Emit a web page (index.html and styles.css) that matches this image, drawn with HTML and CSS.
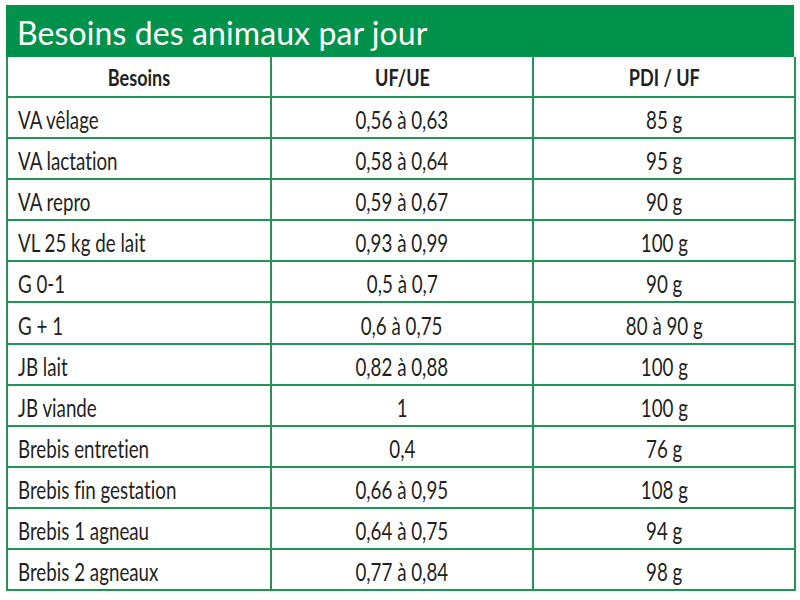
FILE: index.html
```html
<!DOCTYPE html>
<html lang="fr">
<head>
<meta charset="utf-8">
<title>Besoins des animaux par jour</title>
<link rel="stylesheet" href="styles.css">
</head>
<body>
<div class="card">
  <h1 class="title">Besoins des animaux par jour</h1>
  <table class="grid">
    <colgroup><col class="c1"><col class="c2"><col class="c3"></colgroup>
    <thead>
      <tr><th><span class="t">Besoins</span></th><th><span class="t">UF/UE</span></th><th><span class="t">PDI / UF</span></th></tr>
    </thead>
    <tbody>
      <tr><td><span class="t">VA vêlage</span></td><td><span class="t">0,56 à 0,63</span></td><td><span class="t">85 g</span></td></tr>
      <tr><td><span class="t">VA lactation</span></td><td><span class="t">0,58 à 0,64</span></td><td><span class="t">95 g</span></td></tr>
      <tr><td><span class="t">VA repro</span></td><td><span class="t">0,59 à 0,67</span></td><td><span class="t">90 g</span></td></tr>
      <tr><td><span class="t">VL 25 kg de lait</span></td><td><span class="t">0,93 à 0,99</span></td><td><span class="t">100 g</span></td></tr>
      <tr><td><span class="t">G 0-1</span></td><td><span class="t">0,5 à 0,7</span></td><td><span class="t">90 g</span></td></tr>
      <tr><td><span class="t">G + 1</span></td><td><span class="t">0,6 à 0,75</span></td><td><span class="t">80 à 90 g</span></td></tr>
      <tr><td><span class="t">JB lait</span></td><td><span class="t">0,82 à 0,88</span></td><td><span class="t">100 g</span></td></tr>
      <tr><td><span class="t">JB viande</span></td><td><span class="t">1</span></td><td><span class="t">100 g</span></td></tr>
      <tr><td><span class="t">Brebis entretien</span></td><td><span class="t">0,4</span></td><td><span class="t">76 g</span></td></tr>
      <tr><td><span class="t">Brebis fin gestation</span></td><td><span class="t">0,66 à 0,95</span></td><td><span class="t">108 g</span></td></tr>
      <tr><td><span class="t">Brebis 1 agneau</span></td><td><span class="t">0,64 à 0,75</span></td><td><span class="t">94 g</span></td></tr>
      <tr><td><span class="t">Brebis 2 agneaux</span></td><td><span class="t">0,77 à 0,84</span></td><td><span class="t">98 g</span></td></tr>
    </tbody>
  </table>
</div>
</body>
</html>
```
FILE: styles.css
```css
html, body {
  margin: 0;
  padding: 0;
  background: #ffffff;
}
body {
  font-family: Lato, "Open Sans", sans-serif;
  color: #231f20;
  font-variant-ligatures: none;
}
.card {
  width: 788px;
  margin: 5px 0 0 6px;
}
.title {
  margin: 0;
  height: 52px;
  box-sizing: border-box;
  background: #00924a;
  color: #ffffff;
  font-weight: 400;
  font-size: 32px;
  line-height: 50px;
  padding-top: 3px;
  padding-left: 11px;
  letter-spacing: 0.1px;
}
.grid {
  width: 788px;
  border-collapse: collapse;
  table-layout: fixed;
  border: 2px solid #1f9556;
  border-top: none;
}
.c1 { width: 264px; }
.c2 { width: 262px; }
.c3 { width: 262px; }
.grid th, .grid td {
  border: 2px solid #1f9556;
  padding: 0;
  white-space: nowrap;
  overflow: visible;
}
.grid th {
  height: 37px;
  font-weight: 700;
  font-size: 22px;
  text-align: center;
  vertical-align: middle;
  border-top: none;
  padding-top: 2px;
}
.grid td {
  height: 36.1px;
  font-size: 25px;
  text-align: center;
  vertical-align: middle;
  padding-top: 3px;
}
.grid td:first-child {
  text-align: left;
  padding-left: 10px;
}
.t {
  display: inline-block;
  transform: scaleX(0.75);
  transform-origin: center center;
  line-height: 1;
}
.grid th .t {
  transform: scaleX(0.82);
}
.grid td:first-child .t {
  transform-origin: left center;
}
```
